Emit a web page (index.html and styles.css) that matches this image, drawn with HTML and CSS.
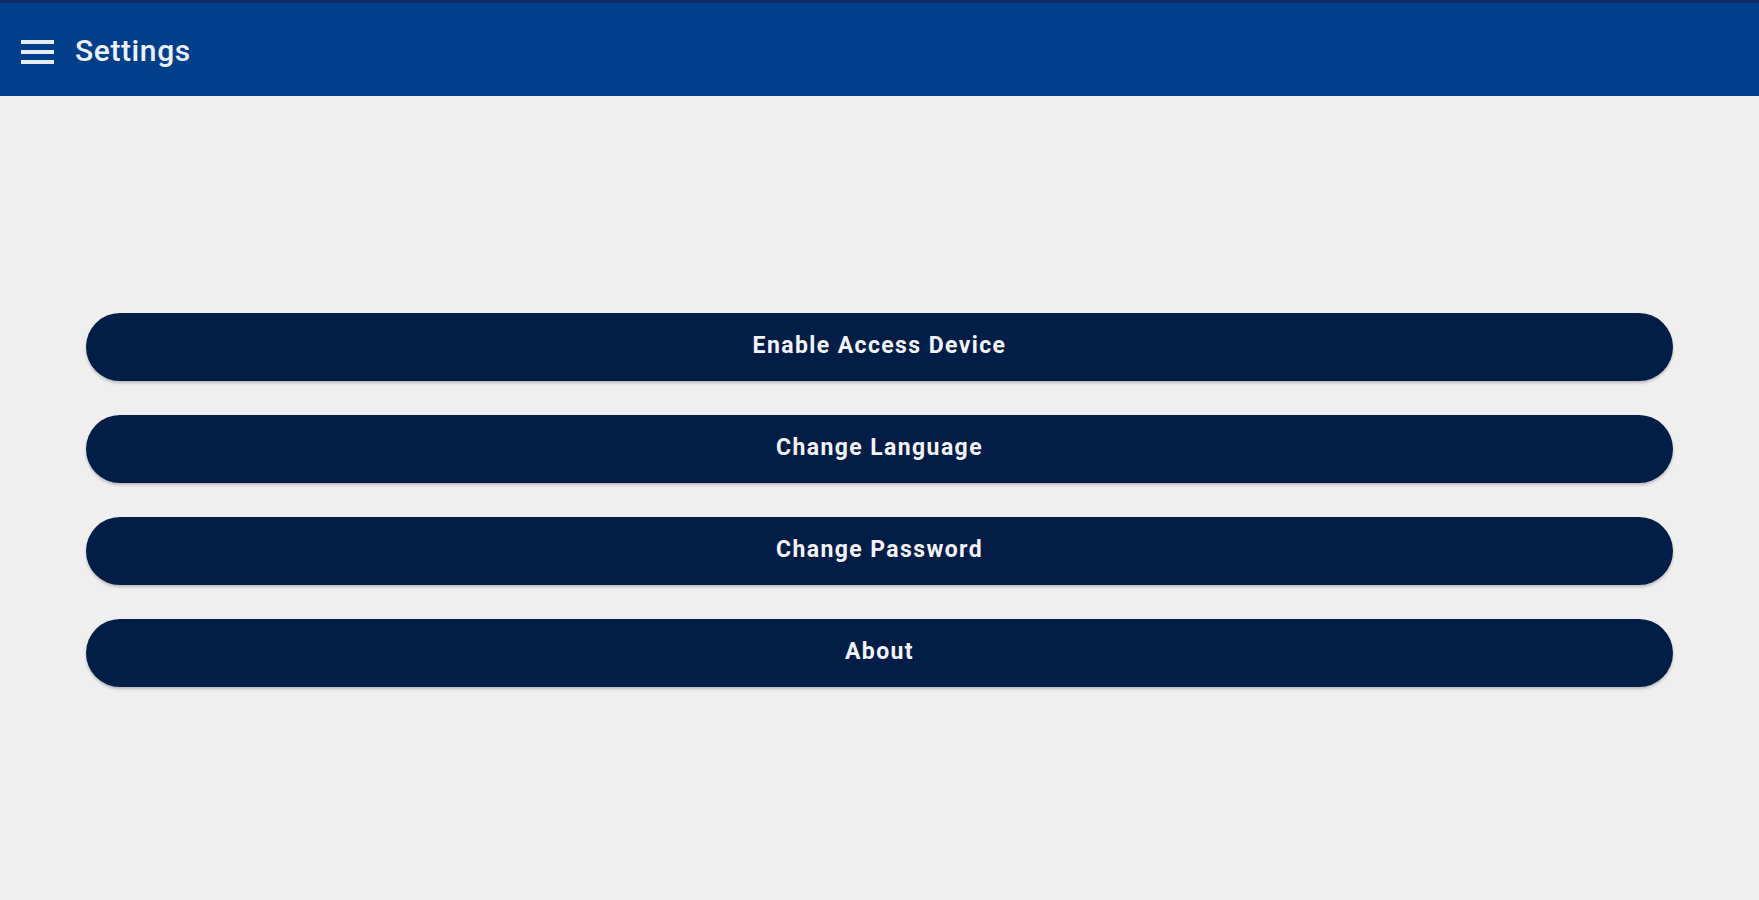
FILE: index.html
```html
<!DOCTYPE html>
<html>
<head>
<meta charset="utf-8">
<link rel="stylesheet" href="styles.css">
</head>
<body>
<header class="appbar">
  <div class="menu-icon" aria-label="menu">
    <span></span><span></span><span></span>
  </div>
  <h1 class="title">Settings</h1>
</header>
<main class="content">
  <button class="action">Enable Access Device</button>
  <button class="action">Change Language</button>
  <button class="action">Change Password</button>
  <button class="action">About</button>
</main>
</body>
</html>
```
FILE: styles.css
```css
html, body {
  margin: 0;
  padding: 0;
  height: 100%;
}
body {
  background: #efefef;
  font-family: Roboto, "Liberation Sans", sans-serif;
}
.appbar {
  height: 93px;
  border-top: 3px solid #0c2c63;
  background: #023f8b;
  display: flex;
  align-items: center;
  padding-left: 21px;
  gap: 21px;
  box-sizing: content-box;
}
.menu-icon {
  display: flex;
  flex-direction: column;
  gap: 6px;
  width: 33px;
  margin-top: 4px;
}
.menu-icon span {
  display: block;
  height: 4px;
  background: #e8ecf3;
}
.title {
  margin: 0;
  color: #eef2f8;
  font-size: 30px;
  font-weight: 500;
  letter-spacing: 0.6px;
  margin-top: 2px;
}
.content {
  display: flex;
  flex-direction: column;
  gap: 34px;
  padding: 217px 86px 0;
}
.action {
  height: 68px;
  border: none;
  border-radius: 34px;
  background: #021e47;
  color: #f2f4f7;
  font-family: Roboto, "Liberation Sans", sans-serif;
  font-size: 23px;
  font-weight: 700;
  letter-spacing: 1.4px;
  padding: 0 0 4px;
  box-shadow: 0 2px 3px rgba(0,0,0,0.22);
  cursor: pointer;
}
```
